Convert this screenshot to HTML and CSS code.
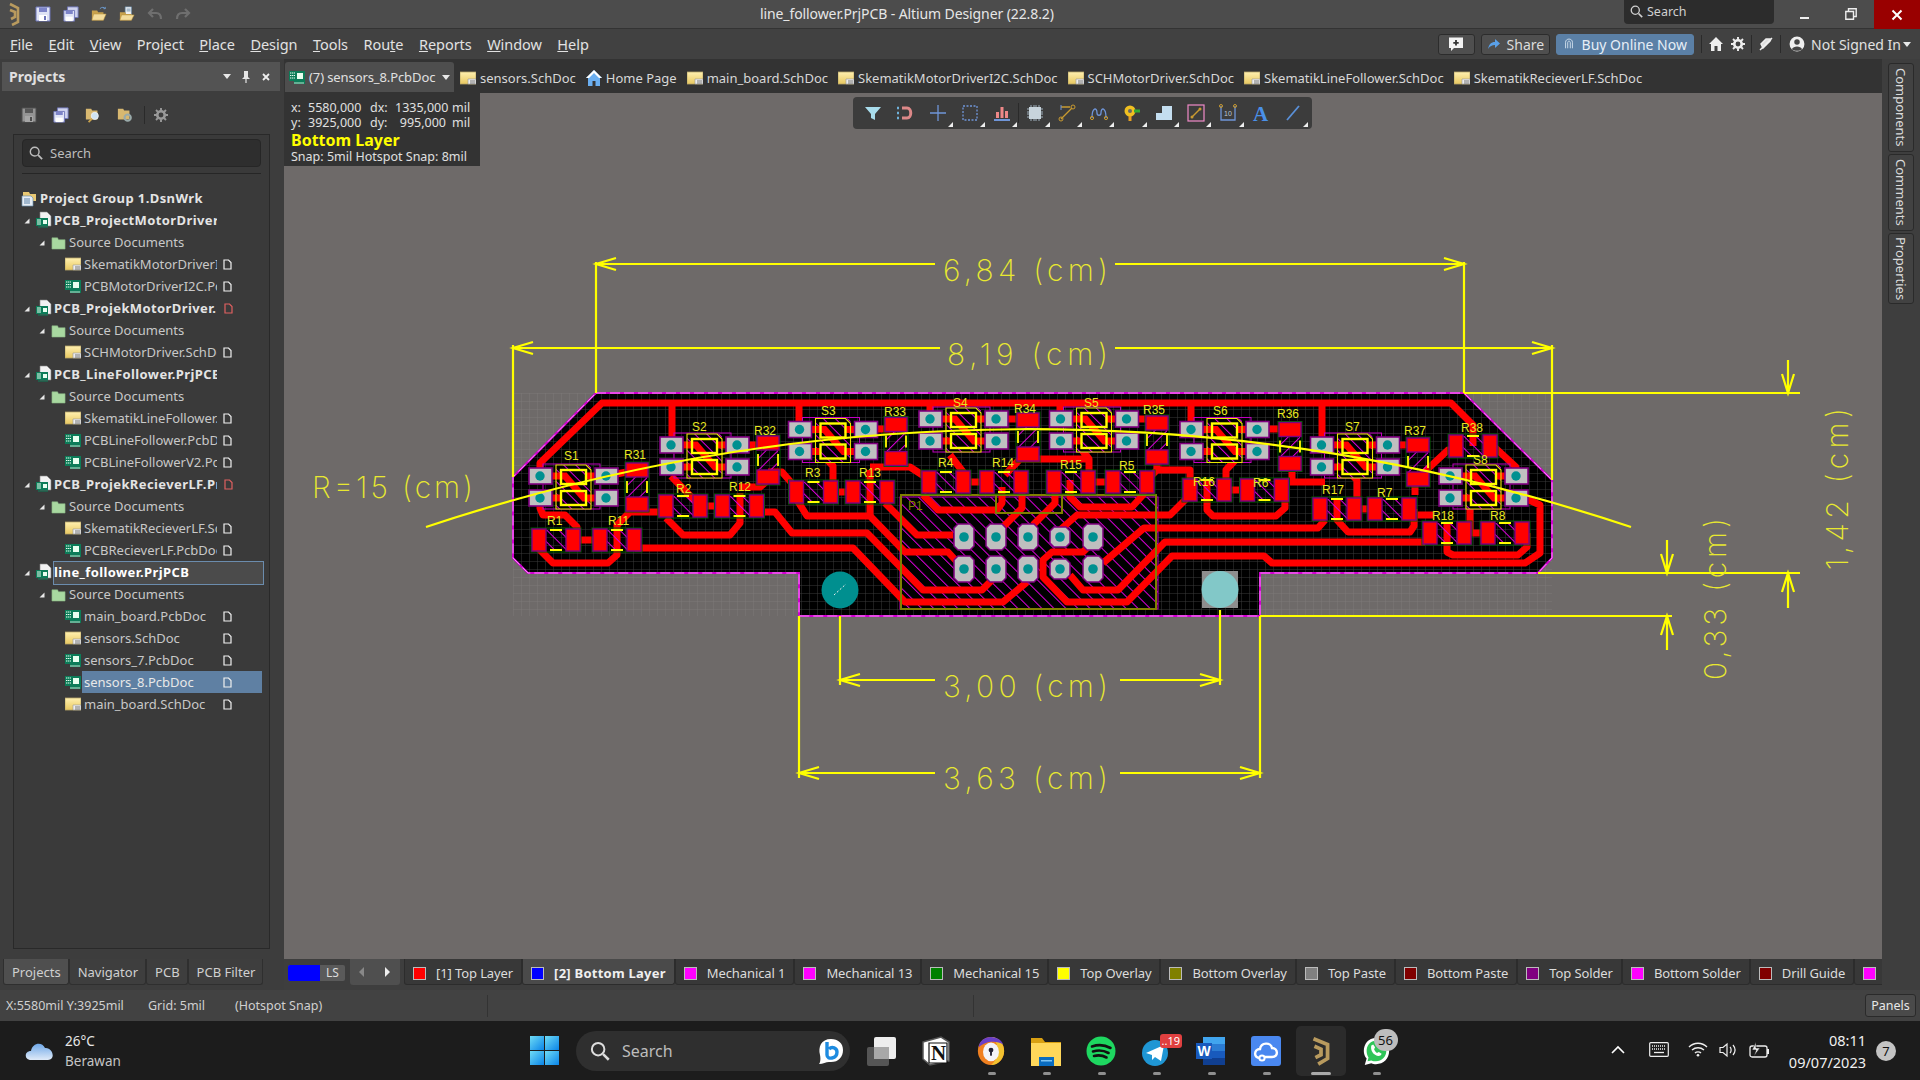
FILE: index.html
```html
<!DOCTYPE html>
<html lang="en">
<head>
<meta charset="utf-8">
<title>line_follower.PrjPCB - Altium Designer</title>
<link rel="stylesheet" href="styles.css">
</head>
<body>
<svg class="defs" xmlns="http://www.w3.org/2000/svg">
  <defs>
    <linearGradient id="gSch" x1="0" y1="0" x2="0" y2="1"><stop offset="0" stop-color="#fff0b0"/><stop offset="1" stop-color="#e8c860"/></linearGradient>
    <linearGradient id="gWin" x1="0" y1="0" x2="1" y2="1"><stop offset="0" stop-color="#6fdcf5"/><stop offset="1" stop-color="#0a84e8"/></linearGradient>
    <linearGradient id="gCloud" x1="0" y1="0" x2="0" y2="1"><stop offset="0" stop-color="#6fa8e8"/><stop offset="1" stop-color="#dfeaf8"/></linearGradient>
    <symbol id="i-sch" viewBox="0 0 16 16"><path d="M0 2H16V14H0Z" fill="url(#gSch)" stroke="#b8a468" stroke-width=".8"/><path d="M8 14V9H16V14Z" fill="#eee" stroke="#999" stroke-width=".6"/><path d="M10 11H15M10 13H15" stroke="#777" stroke-width="1"/></symbol>
    <symbol id="i-pcb" viewBox="0 0 16 16"><path d="M0 2H16V12H0Z" fill="#0c7c58"/><path d="M1 4H6M1 6.5H6M1 9H6" stroke="#e8fff0" stroke-width="1.2" stroke-dasharray="1.4 .6"/><rect x="8" y="4" width="6" height="6" fill="#e8fff0"/><rect x="5" y="12" width="11" height="3" fill="#0c7c58"/><path d="M6 13V15M8 13V15M10 13V15M12 13V15M14 13V15" stroke="#e8fff0" stroke-width=".8"/></symbol>
    <symbol id="i-prj" viewBox="0 0 17 18"><path d="M5 1H12L16 5V15H5Z" fill="#f2f2f2" stroke="#888" stroke-width=".6"/><path d="M1 7H13V15H1Z" fill="#0c7c58"/><path d="M2 9H6M2 11H6M2 13H6" stroke="#e8fff0" stroke-width="1"/><rect x="8" y="9" width="4" height="4" fill="#e8fff0"/><path d="M4 15V17M6 15V17M8 15V17M10 15V17M12 15V17" stroke="#0c7c58" stroke-width="1"/></symbol>
    <symbol id="i-folder" viewBox="0 0 16 16"><path d="M1 3H7L8 5H15V15H1Z" fill="#a8d8a0" stroke="#86b080" stroke-width=".6"/></symbol>
    <symbol id="i-doc" viewBox="0 0 9 11"><path d="M1 1H5.500L8 3.500V10H1Z" fill="none" stroke="currentColor" stroke-width="1.200"/></symbol>
    <symbol id="i-grp" viewBox="0 0 17 18"><path d="M2 3H8L9 5H15V12H2Z" fill="#e9c873"/><path d="M1 7H10L12 9V17H1Z" fill="#e8eef5" stroke="#6a8fb0" stroke-width=".7"/><path d="M3 10H9M3 12H9M3 14H9" stroke="#5a82a8" stroke-width="1"/></symbol>
    <symbol id="i-tw" viewBox="0 0 6 6"><path d="M5.500 .5V5.500H.5Z" fill="#e8e8e8"/></symbol>
    <symbol id="i-save" viewBox="0 0 16 16"><path d="M1 1H15V15H1Z" fill="#dfe3f5" stroke="#6d74b8" stroke-width="1"/><path d="M4 1.500H12V6H4Z" fill="#7d84c8"/><path d="M4 9H12V15H4Z" fill="#fff"/><rect x="9" y="10" width="2" height="4" fill="#6d74b8"/></symbol>
    <symbol id="i-saveall" viewBox="0 0 18 18"><path d="M5 1H17V13H5Z" fill="#cfd3ee" stroke="#6d74b8"/><path d="M1 5H13V17H1Z" fill="#dfe3f5" stroke="#6d74b8"/><path d="M3 5.500H11V9H3Z" fill="#7d84c8"/><path d="M3 12H11V17H3Z" fill="#fff"/></symbol>
    <symbol id="i-open" viewBox="0 0 18 18"><path d="M1 5H7L8 7H14V16H1Z" fill="#c9a24d"/><path d="M3 9H17L14 16H1Z" fill="#f3dc9c" stroke="#b8923f" stroke-width=".6"/><path d="M10 3C12 1 15 1 16 3M16 3L16 1M16 3L14 3" stroke="#6fa0d8" stroke-width="1" fill="none"/></symbol>
    <symbol id="i-open2" viewBox="0 0 18 18"><path d="M7 1H14V10H7Z" fill="#f2f2f2" stroke="#6a8fb0" stroke-width=".7"/><path d="M8.500 3.500H13M8.500 5.500H13" stroke="#6a8fb0"/><path d="M1 7H7L8 9H14V16H1Z" fill="#c9a24d"/><path d="M3 10H17L14 16H1Z" fill="#f3dc9c" stroke="#b8923f" stroke-width=".6"/></symbol>
    <symbol id="i-pfind" viewBox="0 0 18 18"><path d="M1 2H7L8 4H14V14H1Z" fill="#d8b870"/><circle cx="11" cy="10" r="4" fill="#cfe3f2" stroke="#eee"/><path d="M8 13L4 17" stroke="#c9a24d" stroke-width="2"/></symbol>
    <symbol id="i-pset" viewBox="0 0 18 18"><path d="M1 2H7L8 4H14V14H1Z" fill="#d8b870"/><circle cx="12" cy="12" r="3.500" fill="none" stroke="#9aa" stroke-width="2.400"/></symbol>
    <symbol id="i-undo" viewBox="0 0 16 16"><path d="M6 3L2 7L6 11M2 7H9C12 7 14 9 14 13" fill="none" stroke="#6f6f6f" stroke-width="2.200"/></symbol>
    <symbol id="i-gear" viewBox="0 0 16 16"><circle cx="8" cy="8" r="4.300" fill="none" stroke="currentColor" stroke-width="3"/><path d="M8 0V3M8 13V16M0 8H3M13 8H16M2.300 2.300L4.400 4.400M11.600 11.600L13.700 13.700M13.700 2.300L11.600 4.400M4.400 11.600L2.300 13.700" stroke="currentColor" stroke-width="2.200"/></symbol>
    <symbol id="i-search" viewBox="0 0 16 16"><circle cx="6.500" cy="6.500" r="5" fill="none" stroke="currentColor" stroke-width="1.600"/><path d="M10.500 10.500L15 15" stroke="currentColor" stroke-width="2"/></symbol>
  </defs>
</svg>

<div class="app">
  <header class="titlebar">
    <svg class="logo" viewBox="0 0 14 24"><path d="M3 2L11 6V20L5 23M3 8L8 10V15L4 17" fill="none" stroke="#b89a5e" stroke-width="2.600"/></svg>
    <div class="qa">
      <svg class="ic16"><use href="#i-save"/></svg>
      <svg class="ic16"><use href="#i-saveall"/></svg>
      <svg class="ic16"><use href="#i-open"/></svg>
      <svg class="ic16"><use href="#i-open2"/></svg>
      <svg class="ic16"><use href="#i-undo"/></svg>
      <svg class="ic16 flip"><use href="#i-undo"/></svg>
    </div>
    <div class="apptitle">line_follower.PrjPCB - Altium Designer (22.8.2)</div>
    <div class="topsearch"><svg class="ic13"><use href="#i-search"/></svg><span>Search</span></div>
    <div class="winbtns">
      <span class="wb"><i class="min"></i></span>
      <span class="wb"><svg class="ic12" viewBox="0 0 12 12"><path d="M3.500 3V.8H11.200V8.500H9M.8 3.500H8.500V11.200H.8Z" fill="none" stroke="#eee" stroke-width="1.400"/></svg></span>
      <span class="wb close"><svg class="ic12" viewBox="0 0 12 12"><path d="M1.500 1.500L10.500 10.500M10.500 1.500L1.500 10.500" stroke="#fff" stroke-width="2"/></svg></span>
    </div>
  </header>

  <nav class="menubar">
    <div class="menus">
      <span><u>F</u>ile</span><span><u>E</u>dit</span><span><u>V</u>iew</span><span>Pro<u>j</u>ect</span><span><u>P</u>lace</span><span><u>D</u>esign</span><span><u>T</u>ools</span><span>Rou<u>t</u>e</span><span><u>R</u>eports</span><span><u>W</u>indow</span><span><u>H</u>elp</span>
    </div>
    <div class="menuright">
      <span class="btn comment"><svg class="ic16" viewBox="0 0 16 16"><path d="M1 1.500H15V12H6L3 15V12H1Z" fill="#f2f2f2"/><path d="M8 4V9.500M5.300 6.800H10.700" stroke="#333" stroke-width="1.800"/></svg></span>
      <span class="btn share"><svg class="ic12" viewBox="0 0 12 12"><path d="M7 1L12 5.500L7 10V7C4 7 2 8 0 11C1 6.500 3 4 7 4Z" fill="#5aa0e8"/></svg>Share</span>
      <span class="btn buy"><svg class="ic12" viewBox="0 0 12 14"><path d="M2 12V5C2 0 10 0 10 5V12M4.500 12V5.500C4.500 3 7.500 3 7.500 5.500V12" fill="none" stroke="#d9e6f2" stroke-width="1"/></svg>Buy Online Now</span>
      <i class="vsep"></i>
      <svg class="ic14 home" viewBox="0 0 14 14"><path d="M7 0L14 7H12V14H8.500V9H5.500V14H2V7H0Z" fill="#eee"/></svg>
      <svg class="ic14 gearw"><use href="#i-gear"/></svg>
      <i class="vsep"></i>
      <svg class="ic14 plug" viewBox="0 0 14 14"><path d="M1 13L13 1M2 7L7 2H12L11 4L4 11Z" stroke="#eee" stroke-width="1.500" fill="#ddd"/></svg>
      <i class="vsep"></i>
      <svg class="ic14 user" viewBox="0 0 14 14"><circle cx="7" cy="7" r="6.500" fill="#eee"/><circle cx="7" cy="5.300" r="2.400" fill="#444"/><path d="M2.500 11.500C4 8.500 10 8.500 11.500 11.500C9.500 13.300 4.500 13.300 2.500 11.500Z" fill="#444"/></svg>
      <span class="signed">Not Signed In</span><i class="caret"></i>
    </div>
  </nav>

  <main class="work">
    <aside class="left">
      <div class="phead"><b>Projects</b><div class="pctl"><i class="caret"></i><svg class="ic10" viewBox="0 0 10 12"><path d="M3 0H7V6L9 8H5.600V12H4.400V8H1L3 6Z" fill="#e5e5e5"/></svg><svg class="ic10" viewBox="0 0 10 10"><path d="M2 2L8 8M8 2L2 8" stroke="#eee" stroke-width="1.800"/></svg></div></div>
      <div class="ptools">
        <svg class="ic16 dim"><use href="#i-save"/></svg>
        <svg class="ic16"><use href="#i-saveall"/></svg>
        <svg class="ic16"><use href="#i-pfind"/></svg>
        <svg class="ic16"><use href="#i-pset"/></svg>
        <i class="vsep"></i>
        <svg class="ic14 gearg"><use href="#i-gear"/></svg>
      </div>
      <div class="pbox">
        <div class="psearch"><svg class="ic14"><use href="#i-search"/></svg><span>Search</span></div>
        <div class="prule"></div>
        <div class="tree">
          <div class="row d0"><svg class="ic17"><use href="#i-grp"/></svg><span class="lbl bold">Project Group 1.DsnWrk</span></div>
          <div class="row d1"><svg class="tw"><use href="#i-tw"/></svg><svg class="ic17"><use href="#i-prj"/></svg><span class="lbl bold">PCB_ProjectMotorDriverI2C.PrjPCB</span></div>
          <div class="row d2"><svg class="tw"><use href="#i-tw"/></svg><svg class="ic15"><use href="#i-folder"/></svg><span class="lbl">Source Documents</span></div>
          <div class="row d3"><svg class="ic16"><use href="#i-sch"/></svg><span class="lbl">SkematikMotorDriverI2C.SchDoc</span><svg class="docic"><use href="#i-doc"/></svg></div>
          <div class="row d3"><svg class="ic16"><use href="#i-pcb"/></svg><span class="lbl">PCBMotorDriverI2C.PcbDoc</span><svg class="docic"><use href="#i-doc"/></svg></div>
          <div class="row d1"><svg class="tw"><use href="#i-tw"/></svg><svg class="ic17"><use href="#i-prj"/></svg><span class="lbl bold">PCB_ProjekMotorDriver.PrjPCB</span><svg class="docic red"><use href="#i-doc"/></svg></div>
          <div class="row d2"><svg class="tw"><use href="#i-tw"/></svg><svg class="ic15"><use href="#i-folder"/></svg><span class="lbl">Source Documents</span></div>
          <div class="row d3"><svg class="ic16"><use href="#i-sch"/></svg><span class="lbl">SCHMotorDriver.SchDoc</span><svg class="docic"><use href="#i-doc"/></svg></div>
          <div class="row d1"><svg class="tw"><use href="#i-tw"/></svg><svg class="ic17"><use href="#i-prj"/></svg><span class="lbl bold">PCB_LineFollower.PrjPCB</span></div>
          <div class="row d2"><svg class="tw"><use href="#i-tw"/></svg><svg class="ic15"><use href="#i-folder"/></svg><span class="lbl">Source Documents</span></div>
          <div class="row d3"><svg class="ic16"><use href="#i-sch"/></svg><span class="lbl">SkematikLineFollower.SchDoc</span><svg class="docic"><use href="#i-doc"/></svg></div>
          <div class="row d3"><svg class="ic16"><use href="#i-pcb"/></svg><span class="lbl">PCBLineFollower.PcbDoc</span><svg class="docic"><use href="#i-doc"/></svg></div>
          <div class="row d3"><svg class="ic16"><use href="#i-pcb"/></svg><span class="lbl">PCBLineFollowerV2.PcbDoc</span><svg class="docic"><use href="#i-doc"/></svg></div>
          <div class="row d1"><svg class="tw"><use href="#i-tw"/></svg><svg class="ic17"><use href="#i-prj"/></svg><span class="lbl bold">PCB_ProjekRecieverLF.PrjPCB</span><svg class="docic red"><use href="#i-doc"/></svg></div>
          <div class="row d2"><svg class="tw"><use href="#i-tw"/></svg><svg class="ic15"><use href="#i-folder"/></svg><span class="lbl">Source Documents</span></div>
          <div class="row d3"><svg class="ic16"><use href="#i-sch"/></svg><span class="lbl">SkematikRecieverLF.SchDoc</span><svg class="docic"><use href="#i-doc"/></svg></div>
          <div class="row d3"><svg class="ic16"><use href="#i-pcb"/></svg><span class="lbl">PCBRecieverLF.PcbDoc</span><svg class="docic"><use href="#i-doc"/></svg></div>
          <div class="row d1 current"><svg class="tw"><use href="#i-tw"/></svg><svg class="ic17"><use href="#i-prj"/></svg><span class="lbl bold">line_follower.PrjPCB</span></div>
          <div class="row d2"><svg class="tw"><use href="#i-tw"/></svg><svg class="ic15"><use href="#i-folder"/></svg><span class="lbl">Source Documents</span></div>
          <div class="row d3"><svg class="ic16"><use href="#i-pcb"/></svg><span class="lbl">main_board.PcbDoc</span><svg class="docic"><use href="#i-doc"/></svg></div>
          <div class="row d3"><svg class="ic16"><use href="#i-sch"/></svg><span class="lbl">sensors.SchDoc</span><svg class="docic"><use href="#i-doc"/></svg></div>
          <div class="row d3"><svg class="ic16"><use href="#i-pcb"/></svg><span class="lbl">sensors_7.PcbDoc</span><svg class="docic"><use href="#i-doc"/></svg></div>
          <div class="row d3 sel"><svg class="ic16"><use href="#i-pcb"/></svg><span class="lbl">sensors_8.PcbDoc</span><svg class="docic"><use href="#i-doc"/></svg></div>
          <div class="row d3"><svg class="ic16"><use href="#i-sch"/></svg><span class="lbl">main_board.SchDoc</span><svg class="docic"><use href="#i-doc"/></svg></div>
        </div>
      </div>
      <div class="ltabs"><span class="on">Projects</span><span>Navigator</span><span>PCB</span><span>PCB Filter</span></div>
    </aside>

    <section class="center">
      <div class="doctabs">
        <span class="dt active"><svg class="ic16"><use href="#i-pcb"/></svg>(7) sensors_8.PcbDoc<i class="caret"></i></span>
        <span class="dt"><svg class="ic16"><use href="#i-sch"/></svg>sensors.SchDoc</span>
        <span class="dt"><svg class="ic16" viewBox="0 0 16 16"><path d="M8 0L16 8H14V16H9.500V11H6.500V16H2V8H0Z" fill="#6aaef0"/><path d="M8 0L16 8H13L8 3L3 8H0Z" fill="#fff"/></svg>Home Page</span>
        <span class="dt"><svg class="ic16"><use href="#i-sch"/></svg>main_board.SchDoc</span>
        <span class="dt"><svg class="ic16"><use href="#i-sch"/></svg>SkematikMotorDriverI2C.SchDoc</span>
        <span class="dt"><svg class="ic16"><use href="#i-sch"/></svg>SCHMotorDriver.SchDoc</span>
        <span class="dt"><svg class="ic16"><use href="#i-sch"/></svg>SkematikLineFollower.SchDoc</span>
        <span class="dt"><svg class="ic16"><use href="#i-sch"/></svg>SkematikRecieverLF.SchDoc</span>
      </div>

      <div class="canvas">
        <svg class="board" viewBox="284 93 1598 866" xmlns="http://www.w3.org/2000/svg">
          <defs>
            <pattern id="gridOut" width="8" height="8" patternUnits="userSpaceOnUse" x="513" y="393"><path d="M8 0H0V8" fill="none" stroke="#7c7877" stroke-width="1"/></pattern>
            <pattern id="gridIn" width="8" height="8" patternUnits="userSpaceOnUse" x="513" y="393"><path d="M8 0H0V8" fill="none" stroke="#3a3a3a" stroke-width="1"/></pattern>
            <pattern id="hatch" width="8.500" height="8.500" patternUnits="userSpaceOnUse" patternTransform="rotate(-45)"><path d="M0 0V8.500" stroke="#e000e0" stroke-width="2"/></pattern>
            <g id="sens">
              <rect x="-30" y="-23" width="57" height="45" fill="none" stroke="#c000c0" stroke-width="1"/>
              <rect x="-17" y="-22" width="35" height="44" fill="#000"/>
              <rect x="-17" y="-22" width="35" height="44" fill="url(#hatch)"/>
              <path d="M-33 -11H-8L11 11H33M-33 11H-12M12 -11H33" fill="none" stroke="#f00" stroke-width="7"/>
              <g fill="#c0c0c0" stroke="#800080" stroke-width="1.600">
                <rect x="-44" y="-19" width="23" height="16"/><rect x="-44" y="3" width="23" height="16"/><rect x="22" y="-19" width="23" height="16"/><rect x="22" y="3" width="23" height="16"/>
              </g>
              <g fill="#009090"><circle cx="-33" cy="-11" r="4.700"/><circle cx="-33" cy="11" r="4.700"/><circle cx="33" cy="-11" r="4.700"/><circle cx="33" cy="11" r="4.700"/></g>
              <path d="M-17 -22H13L18 -17V22H-17Z" fill="none" stroke="#e8e800" stroke-width="1.100"/>
              <g fill="none" stroke="#ff0" stroke-width="2.400"><rect x="-12" y="-17" width="25" height="14"/><rect x="-12" y="4" width="25" height="14"/></g>
            </g>
            <g id="res">
              <rect x="-25" y="-12" width="50" height="24" fill="none" stroke="#006000"/>
              <rect x="-10" y="-10" width="20" height="20" fill="url(#hatch)"/>
              <g fill="#f00" stroke="#800080" stroke-width="1.400"><rect x="-24" y="-11" width="14" height="22"/><rect x="10" y="-11" width="14" height="22"/></g>
              <path d="M-6 -10H6M-6 10H6" stroke="#ff0" stroke-width="1.800"/>
            </g>
            <g id="pad">
              <path d="M-6 -13H6L10 -9V9L6 13H-6L-10 9V-9Z" fill="#bfbfbf" stroke="#800080" stroke-width="1.500"/>
              <circle r="4.800" fill="#009090"/>
            </g>
            <g id="pads">
              <path d="M-6 -10H6L10 -6V6L6 10H-6L-10 6V-6Z" fill="#bfbfbf" stroke="#800080" stroke-width="1.500"/>
              <circle r="4.800" fill="#009090"/>
            </g>
          </defs>

          <rect x="513" y="393" width="1039" height="223" fill="url(#gridOut)"/>
          <path d="M596 393H1464L1552 480V558L1538 573H1260V616H799V573H528L513 558V477Z" fill="#000"/>
          <path d="M596 393H1464L1552 480V558L1538 573H1260V616H799V573H528L513 558V477Z" fill="url(#gridIn)"/>

          <rect x="900" y="497" width="258" height="112" fill="#000"/>
          <rect x="900" y="497" width="258" height="112" fill="url(#hatch)"/>
          <rect x="900" y="497" width="258" height="112" fill="none" stroke="#c000c0"/>

          <g fill="none" stroke="#f00" stroke-width="7" stroke-linejoin="round">
            <path d="M540 476V463L602 403H1451L1473 425V446"/>
            <path d="M672 403V445M799 403V429M930 403V419M1060 403V419M1191 403V429M1322 403V445"/>
            <path d="M606 476L637 470M637 508L630 512H666M630 512L617 525V555L608 563H553L535 545"/>
            <path d="M540 498V508L543 515H565L577 527V540M573 540H600"/>
            <path d="M635 548H853L905 602H1003L1027 582"/>
            <path d="M671 476L700 506H722M740 493V523L730 535H683L666 518M757 512H775L792 533H867L923 590H982L992 580"/>
            <path d="M737 445H768M739 487H760L768 480M768 472H782L796 488M797 500L807 516H870L905 552H948L960 565"/>
            <path d="M885 503L917 535H953M820 452L833 466V492H853M870 470V516M870 467H910L930 480M866 429H896M896 459V467"/>
            <path d="M950 455L967 477V490M963 482H987M923 495L938 510H997L1002 503V487M1022 480V508L1003 527M1055 480V503L1033 525"/>
            <path d="M1070 480V497L1080 507H1132L1143 495V480M1089 482H1113M1060 530L1077 515H1170L1188 497V480"/>
            <path d="M1103 563L1144 528H1318L1325 520M1070 575L1083 590H1118L1165 542H1425"/>
            <path d="M1090 545L1083 552H1052L1043 560V577L1067 602H1127L1172 556H1264L1272 563H1525L1540 553V505L1529 500H1516"/>
            <path d="M1147 480L1157 470V457M1157 470H1190V480M1240 455L1226 470V492M1207 480V510L1213 516H1276L1285 508V495M1224 490H1247M1292 465V482M1282 482H1325"/>
            <path d="M1344 467L1357 480V509M1337 500V520L1348 532H1410L1414 526V509M1355 509H1374M1415 495V480M1410 515H1433M1418 478L1448 450H1456"/>
            <path d="M1387 445H1418M1257 429H1290M1127 419H1157M996 419H1028M1005 475L1020 459H1089V482M1078 445L1089 459"/>
            <path d="M1470 505V533M1464 533H1488M1490 443L1516 467V476M1447 522V552L1453 555H1518L1527 547V533"/>
          </g>

          <g fill="none" stroke="#808000" stroke-width="2"><rect x="901" y="495" width="255" height="114"/><rect x="996" y="495" width="66" height="18"/></g>
          <text class="lab olive" x="908" y="510">P1</text>

          <use href="#sens" x="573" y="487"/><use href="#sens" x="704" y="456"/><use href="#sens" x="832.500" y="440.500"/><use href="#sens" x="963" y="430"/><use href="#sens" x="1093.500" y="430"/><use href="#sens" x="1224" y="440.500"/><use href="#sens" x="1354.500" y="456"/><use href="#sens" x="1483" y="487"/>

          <use href="#res" x="556" y="540"/><use href="#res" x="617" y="540"/><use href="#res" x="683" y="506"/><use href="#res" x="739.500" y="506"/><use href="#res" x="813.500" y="492"/><use href="#res" x="870" y="492"/><use href="#res" x="946" y="482"/><use href="#res" x="1004" y="482"/><use href="#res" x="1071" y="482"/><use href="#res" x="1130" y="482"/><use href="#res" x="1207" y="490"/><use href="#res" x="1264.500" y="490"/><use href="#res" x="1337" y="509"/><use href="#res" x="1392" y="509"/><use href="#res" x="1447" y="533"/><use href="#res" x="1505" y="533"/><use href="#res" x="1473" y="446"/>
          <use href="#res" transform="translate(637 487) rotate(90)"/><use href="#res" transform="translate(768 460) rotate(90)"/><use href="#res" transform="translate(896 441.500) rotate(90)"/><use href="#res" transform="translate(1028 437) rotate(90)"/><use href="#res" transform="translate(1157 440) rotate(90)"/><use href="#res" transform="translate(1290 446.500) rotate(90)"/><use href="#res" transform="translate(1418 462) rotate(90)"/>

          <use href="#pad" x="964" y="537"/><use href="#pad" x="996" y="537"/><use href="#pad" x="1028" y="537"/><use href="#pads" x="1060" y="537"/><use href="#pad" x="1093" y="537"/>
          <use href="#pad" x="964" y="569"/><use href="#pad" x="996" y="569"/><use href="#pad" x="1028" y="569"/><use href="#pads" x="1060" y="569"/><use href="#pad" x="1093" y="569"/>

          <circle cx="840" cy="590" r="18.500" fill="#008f8f"/>
          <path d="M834 595L846 584" stroke="#eee" stroke-width="1" stroke-dasharray="2 2"/>
          <rect x="1202" y="571" width="36" height="37" fill="#8e8e8e"/>
          <circle cx="1220" cy="589.500" r="18.500" fill="#82c8c8"/>

          <g class="labs">
            <text class="lab" x="564" y="460">S1</text><text class="lab" x="692" y="431">S2</text><text class="lab" x="821" y="415">S3</text><text class="lab" x="953" y="407">S4</text><text class="lab" x="1084" y="407">S5</text><text class="lab" x="1213" y="415">S6</text><text class="lab" x="1345" y="431">S7</text><text class="lab" x="1473" y="464">S8</text>
            <text class="lab" x="547" y="525">R1</text><text class="lab" x="608" y="525">R11</text><text class="lab" x="676" y="493">R2</text><text class="lab" x="729" y="491">R12</text><text class="lab" x="805" y="477">R3</text><text class="lab" x="859" y="477">R13</text><text class="lab" x="938" y="467">R4</text><text class="lab" x="992" y="467">R14</text><text class="lab" x="1060" y="469">R15</text><text class="lab" x="1119" y="470">R5</text><text class="lab" x="1193" y="486">R16</text><text class="lab" x="1253" y="487">R6</text><text class="lab" x="1322" y="494">R17</text><text class="lab" x="1377" y="497">R7</text><text class="lab" x="1432" y="520">R18</text><text class="lab" x="1490" y="520">R8</text>
            <text class="lab" x="624" y="459">R31</text><text class="lab" x="754" y="435">R32</text><text class="lab" x="884" y="416">R33</text><text class="lab" x="1014" y="413">R34</text><text class="lab" x="1143" y="414">R35</text><text class="lab" x="1277" y="418">R36</text><text class="lab" x="1404" y="435">R37</text><text class="lab" x="1461" y="432">R38</text>
          </g>

          <path d="M596 393H1464L1552 480V558L1538 573H1260V616H799V573H528L513 558V477Z" fill="none" stroke="#d000d0" stroke-width="2"/>
          <path d="M596 393H1464L1552 480V558L1538 573H1260V616H799V573H528L513 558V477Z" fill="none" stroke="#ff90ff" stroke-width="1" stroke-dasharray="10 4"/>

          <g fill="none" stroke="#ff0" stroke-width="2.200">
            <path d="M596 264H935M1115 264H1464M616 258L596 264L616 270M1444 258L1464 264L1444 270M596 262V393M1464 262V393"/>
            <path d="M513 348H940M1115 348H1552M533 342L513 348L533 354M1532 342L1552 348L1532 354M513 345V477M1552 345V480"/>
            <path d="M1464 393H1800M1788 360V393M1782 374L1788 393L1794 374M1538 573H1800M1788 573V608M1782 592L1788 573L1794 592"/>
            <path d="M1260 616H1672M1667 540V573M1661 554L1667 573L1673 554M1667 616V650M1661 635L1667 616L1673 635"/>
            <path d="M840 616V685M1220 610V685M840 680H935M1120 680H1220M860 674L840 680L860 686M1200 674L1220 680L1200 686"/>
            <path d="M799 616V778M1260 616V778M799 773H935M1120 773H1260M819 767L799 773L819 779M1240 767L1260 773L1240 779"/>
            <path d="M426 527A1905 1905 0 0 1 1631 527"/>
          </g>
          <g class="dimt">
            <text x="943" y="281" textLength="165" lengthAdjust="spacing">6,84 (cm)</text>
            <text x="947" y="365" textLength="161" lengthAdjust="spacing">8,19 (cm)</text>
            <text x="943" y="697" textLength="165" lengthAdjust="spacing">3,00 (cm)</text>
            <text x="943" y="789" textLength="165" lengthAdjust="spacing">3,63 (cm)</text>
            <text x="312" y="498" textLength="161" lengthAdjust="spacing">R=15 (cm)</text>
            <text transform="translate(1848 570) rotate(-90)" textLength="162" lengthAdjust="spacing">1,42 (cm)</text>
            <text transform="translate(1726 680) rotate(-90)" textLength="162" lengthAdjust="spacing">0,33 (cm)</text>
          </g>
        </svg>

        <div class="hud">
          <div class="hudrow"><span>x:</span><span>5580,000</span><span>dx:</span><span>1335,000</span><span>mil</span></div>
          <div class="hudrow"><span>y:</span><span>3925,000</span><span>dy:</span><span>995,000</span><span>mil</span></div>
          <div class="hudlayer">Bottom Layer</div>
          <div class="hudsnap">Snap: 5mil Hotspot Snap: 8mil</div>
        </div>

        <div class="pcbtools">
          <span class="t"><svg viewBox="0 0 18 18"><path d="M1 3H17L11 10V16L7 14V10Z" fill="#a8dcec"/></svg></span>
          <span class="t"><svg viewBox="0 0 18 18"><path d="M6 4H11C16 4 16 14 11 14H6" fill="none" stroke="#d88" stroke-width="3"/><path d="M1 4H3M1 9H3M1 14H3" stroke="#6fb0d8" stroke-width="2.500"/></svg></span>
          <span class="t c"><svg viewBox="0 0 18 18"><path d="M9 1V17M1 9H17" stroke="#6f95d8" stroke-width="1.300"/></svg></span>
          <span class="t c"><svg viewBox="0 0 18 18"><rect x="2" y="2" width="14" height="14" fill="none" stroke="#6f95d8" stroke-width="1.300" stroke-dasharray="2 1.500"/></svg></span>
          <span class="t c"><svg viewBox="0 0 18 18"><path d="M1 16H17" stroke="#6f95d8" stroke-width="2"/><rect x="3" y="8" width="3" height="6" fill="#e88"/><rect x="7.500" y="3" width="3" height="11" fill="#e88"/><rect x="12" y="7" width="3" height="7" fill="#e88"/></svg></span>
          <i class="vsep tall"></i>
          <span class="t c"><svg viewBox="0 0 18 18"><rect x="3" y="3" width="12" height="12" fill="#c8d4dc"/><path d="M5 1V3M8 1V3M10 1V3M13 1V3M5 15V17M8 15V17M10 15V17M13 15V17M1 5H3M1 8H3M1 10H3M1 13H3M15 5H17M15 8H17M15 10H17M15 13H17" stroke="#9fb0bd"/></svg></span>
          <span class="t c"><svg viewBox="0 0 18 18"><path d="M3 15L14 4M3 3H12" stroke="#c89a30" stroke-width="1.400" fill="none"/><circle cx="3" cy="15" r="2" fill="none" stroke="#c89a30"/><circle cx="15" cy="3" r="2" fill="none" stroke="#c89a30"/><path d="M3 1V6" stroke="#6f95d8"/></svg></span>
          <span class="t c"><svg viewBox="0 0 18 18"><path d="M2 14C2 3 7 3 7 9C7 12 11 12 11 9C11 3 16 3 16 14" fill="none" stroke="#6f95d8" stroke-width="1.300"/><circle cx="2" cy="14" r="1.600" fill="none" stroke="#c89a30"/><circle cx="16" cy="14" r="1.600" fill="none" stroke="#c89a30"/></svg></span>
          <span class="t c"><svg viewBox="0 0 18 18"><circle cx="7" cy="7" r="5.500" fill="#f0c020"/><circle cx="7" cy="7" r="2" fill="#666"/><rect x="11" y="5.500" width="6" height="3" fill="#3a3"/><rect x="5.500" y="12" width="3" height="5" fill="#e8a020"/></svg></span>
          <span class="t c"><svg viewBox="0 0 18 18"><path d="M1 9H7V2H17V16H1Z" fill="#c4def0"/></svg></span>
          <span class="t c"><svg viewBox="0 0 18 18"><rect x="1" y="1" width="16" height="16" fill="none" stroke="#f08ac8" stroke-width="1.200"/><path d="M5 13L13 5" stroke="#c89a30" stroke-width="1.400"/><circle cx="5" cy="13" r="1.500" fill="#c89a30"/><circle cx="13" cy="5" r="1.500" fill="#c89a30"/></svg></span>
          <span class="t c"><svg viewBox="0 0 18 18"><path d="M2 2V16H16V2" fill="none" stroke="#6f95d8" stroke-width="1.300"/><circle cx="2" cy="2" r="1.500" fill="none" stroke="#c89a30"/><circle cx="16" cy="2" r="1.500" fill="none" stroke="#c89a30"/><text x="5" y="12" class="tn">10</text></svg></span>
          <span class="t"><svg viewBox="0 0 18 18"><text x="1" y="17" class="ta">A</text></svg></span>
          <span class="t c"><svg viewBox="0 0 18 18"><path d="M3 16L15 2" stroke="#5a90d8" stroke-width="1.800"/></svg></span>
        </div>
      </div>

      <div class="layerbar">
        <span class="ls"><i></i><b>LS</b></span>
        <span class="arrows"><i class="al"></i><i class="ar"></i></span>
        <div class="layers">
          <span class="ly"><i class="sw s-top"></i>[1] Top Layer</span>
          <span class="ly cur"><i class="sw s-bot"></i>[2] Bottom Layer</span>
          <span class="ly"><i class="sw s-mag"></i>Mechanical 1</span>
          <span class="ly"><i class="sw s-mag"></i>Mechanical 13</span>
          <span class="ly"><i class="sw s-grn"></i>Mechanical 15</span>
          <span class="ly"><i class="sw s-yel"></i>Top Overlay</span>
          <span class="ly"><i class="sw s-oli"></i>Bottom Overlay</span>
          <span class="ly"><i class="sw s-gry"></i>Top Paste</span>
          <span class="ly"><i class="sw s-mar"></i>Bottom Paste</span>
          <span class="ly"><i class="sw s-pur"></i>Top Solder</span>
          <span class="ly"><i class="sw s-mag"></i>Bottom Solder</span>
          <span class="ly"><i class="sw s-mar"></i>Drill Guide</span>
          <span class="ly end"><i class="sw s-mag"></i></span>
        </div>
      </div>
    </section>

    <aside class="right">
      <span class="vt v1">Components</span>
      <span class="vt v2">Comments</span>
      <span class="vt v3">Properties</span>
    </aside>
  </main>

  <div class="statusbar">
    <span class="st1">X:5580mil Y:3925mil</span><span class="st2">Grid: 5mil</span><span class="st3">(Hotspot Snap)</span>
    <i class="ssep s1"></i><i class="ssep s2"></i>
    <span class="panels">Panels</span>
  </div>

  <footer class="taskbar">
    <div class="weather">
      <svg class="wicon" viewBox="0 0 30 20"><path d="M6 19C-1 19 -1 10 6 10C7 2 17 0 20 7C28 6 31 19 23 19Z" fill="url(#gCloud)"/></svg>
      <div class="wtext"><span>26°C</span><span>Berawan</span></div>
    </div>
    <svg class="winlogo" viewBox="0 0 29 29"><g fill="url(#gWin)"><rect width="14" height="14"/><rect x="15" width="14" height="14"/><rect y="15" width="14" height="14"/><rect x="15" y="15" width="14" height="14"/></g></svg>
    <div class="tsearch"><svg class="ic20"><use href="#i-search"/></svg><span>Search</span>
      <svg class="bing" viewBox="0 0 26 28"><path d="M13 2C3 2 0 10 2 18C3 23 2 26 1 27C5 27 8 25 11 25C20 26 25 20 25 13C25 6 20 2 13 2Z" fill="#fff"/><path d="M9 5V18C9 23 19 22 19 15C19 11 14 9 11 12" fill="none" stroke="#1e8be0" stroke-width="3.400"/></svg>
    </div>
    <div class="apps">
      <span class="app-i"><svg viewBox="0 0 30 30"><rect x="1" y="11" width="22" height="19" rx="2" fill="#555"/><rect x="8" y="1" width="22" height="22" rx="2" fill="#eee"/><rect x="8" y="11" width="15" height="12" fill="#a8a8a8"/></svg></span>
      <span class="app-i"><svg viewBox="0 0 30 30"><path d="M2 6L20 1L28 6V25L9 29L2 23Z" fill="#fff" stroke="#555" stroke-width="1.500"/><path d="M8 7H26V27H8Z" fill="#fff" stroke="#111" stroke-width="1.200"/><text x="10" y="24" class="ntn">N</text></svg></span>
      <span class="app-i"><svg viewBox="0 0 30 32"><ellipse cx="15" cy="16" rx="14" ry="15" fill="#f08020"/><path d="M15 1C23 1 29 8 29 16C29 24 23 31 15 31C20 27 22 22 22 15C22 9 20 4 15 1Z" fill="#f2c230"/><path d="M15 1C8 1 2 6 2 12C8 6 20 4 28 9C26 4 21 1 15 1Z" fill="#6a40c8"/><ellipse cx="15" cy="17" rx="8.500" ry="10" fill="#f4f4f8"/><circle cx="15" cy="15" r="2.600" fill="#223"/><rect x="14" y="16" width="2" height="5" fill="#223"/></svg></span>
      <span class="app-i"><svg viewBox="0 0 30 30"><path d="M0 2H11L14 6H30V28H0Z" fill="#d9a012"/><path d="M0 7H30V30H0Z" fill="#ffd75a"/><rect x="8" y="21" width="15" height="9" fill="#0a6cc0"/><rect x="10" y="24" width="11" height="1.500" fill="#7cc4f4"/></svg></span>
      <span class="app-i"><svg viewBox="0 0 30 30"><circle cx="15" cy="15" r="14.500" fill="#1ed760"/><path d="M6 10.500C12 8.500 19 9 24.500 12M7 15.500C12 14 18 14.500 22.500 17M8 20C12 19 17 19.500 20.500 21.500" fill="none" stroke="#111" stroke-width="2.600" stroke-linecap="round"/></svg></span>
      <span class="app-i"><svg viewBox="0 0 30 30"><circle cx="14" cy="17" r="13" fill="#1f96d4"/><path d="M5 17L23 9L20 25L14 21L11 24V19Z" fill="#fff"/></svg><em class="badge">..19</em></span>
      <span class="app-i"><svg viewBox="0 0 30 30"><rect x="7" y="1" width="22" height="28" rx="1" fill="#2b7cd3"/><rect x="7" y="1" width="22" height="7" fill="#41a5ee"/><rect x="7" y="15" width="22" height="7" fill="#185abd"/><rect x="7" y="22" width="22" height="7" fill="#103f91"/><rect x="0" y="7" width="16" height="16" fill="#185abd"/><text x="1.500" y="20" class="wd">W</text></svg></span>
      <span class="app-i"><svg viewBox="0 0 30 30"><rect width="30" height="30" rx="3" fill="#4a88f0"/><path d="M9 22C2 22 3 13 9 13C10 6 20 6 21 12C27 12 28 21 21 21H13" fill="none" stroke="#fff" stroke-width="2.400"/><circle cx="11" cy="22" r="2.600" fill="none" stroke="#fff" stroke-width="2"/></svg></span>
      <span class="app-i act"><svg viewBox="0 0 30 32"><path d="M7 3L22 9V24L12 30M8 11L15 14V20L9 23" fill="none" stroke="#b89a5e" stroke-width="4"/></svg></span>
      <span class="app-i"><svg viewBox="0 0 30 32"><path d="M15 2C7 2 2 8 2 16C2 19 3 22 5 24L3 31L10 29C12 30 13 30 15 30C23 30 29 24 29 16C29 8 23 2 15 2Z" fill="#fff"/><path d="M15 5C9 5 5 10 5 16C5 19 6 21 7 23L6 27L10 26C12 27 13 27 15 27C21 27 26 22 26 16C26 10 21 5 15 5Z" fill="#2fc558"/><path d="M10 10C9 14 11 18 14 20C17 22 20 22 21 19L18 17L16 18C15 17 13 15 13 14L14 12L12 9Z" fill="#fff"/></svg><em class="badge gray">56</em></span>
    </div>
    <div class="tray">
      <svg class="ic14" viewBox="0 0 14 10"><path d="M1 8L7 2L13 8" fill="none" stroke="#fff" stroke-width="1.600"/></svg>
      <svg class="kb" viewBox="0 0 20 15"><rect x=".7" y=".7" width="18.600" height="13.600" rx="1" fill="none" stroke="#eee" stroke-width="1.200"/><path d="M3 4H17M3 7H17" stroke="#eee" stroke-width="1.300" stroke-dasharray="1 1"/><path d="M5 10.500H15" stroke="#eee" stroke-width="1.300"/></svg>
      <svg class="wf" viewBox="0 0 20 15"><path d="M1 5C6 0 14 0 19 5M4 8C7.500 5 12.500 5 16 8M7 11C8.500 9.500 11.500 9.500 13 11" fill="none" stroke="#eee" stroke-width="1.400"/><circle cx="10" cy="13.300" r="1.300" fill="#eee"/></svg>
      <svg class="vol" viewBox="0 0 20 16"><path d="M1 5.500H4L8 2V14L4 10.500H1Z" fill="none" stroke="#eee" stroke-width="1.200"/><path d="M11 5C12.500 6.500 12.500 9.500 11 11M14 3C16.500 6 16.500 10 14 13" fill="none" stroke="#eee" stroke-width="1.200"/></svg>
      <svg class="bat" viewBox="0 0 22 16"><rect x="1" y="4" width="17" height="11" rx="2" fill="none" stroke="#eee" stroke-width="1.300"/><rect x="18" y="7" width="2" height="5" fill="#eee"/><path d="M7 0L3 8H7L5 14L11 6H7Z" fill="#eee" stroke="#1c1c1c" stroke-width=".6"/></svg>
      <div class="clock"><span>08:11</span><span>09/07/2023</span></div>
      <em class="notif">7</em>
    </div>
  </footer>
</div>
</body>
</html>
```

FILE: styles.css
```css
* { box-sizing: border-box; }
html, body { margin: 0; padding: 0; width: 1920px; height: 1080px; overflow: hidden; background: #3c3c3c; }
body { font-family: "Noto Sans", "Open Sans", sans-serif; font-size: 13px; color: #dcdcdc; }
i, em { font-style: normal; display: block; }
svg { display: block; flex: none; }
.defs { position: absolute; width: 0; height: 0; }

.app { width: 1920px; height: 1080px; display: flex; flex-direction: column; }

.ic10 { width: 10px; height: 12px; }
.ic12 { width: 12px; height: 12px; }
.ic13 { width: 13px; height: 13px; }
.ic14 { width: 14px; height: 14px; }
.ic15 { width: 15px; height: 15px; }
.ic16 { width: 16px; height: 16px; }
.ic17 { width: 17px; height: 18px; }
.ic20 { width: 20px; height: 20px; }

/* title bar */
.titlebar { height: 29px; flex: none; display: flex; align-items: center; background: #4c4c4c; border-bottom: 1px solid #333; position: relative; }
.logo { width: 14px; height: 24px; margin-left: 7px; }
.qa { display: flex; align-items: center; gap: 12px; margin-left: 14px; }
.flip { transform: scaleX(-1); }
.apptitle { position: absolute; left: 760px; top: 4px; font-size: 14px; line-height: 20px; color: #e6e6e6; letter-spacing: -.1px; }
.topsearch { margin-left: auto; width: 150px; height: 24px; margin-top: -5px; background: #2c2c2c; border-radius: 0 0 4px 4px; display: flex; align-items: center; gap: 4px; padding-left: 6px; color: #d0d0d0; font-size: 12.500px; }
.winbtns { display: flex; margin-left: 10px; align-self: stretch; }
.wb { width: 47px; display: flex; align-items: center; justify-content: center; }
.wb:first-child { width: 46px; margin-left: -3px; }
.wb.close { background: #990000; width: 46px; margin-bottom: -1px; }
.min { width: 9px; height: 2px; background: #eee; margin-top: 8px; }

/* menu bar */
.menubar { height: 30px; flex: none; background: #414141; display: flex; align-items: center; justify-content: space-between; padding: 0 9px 0 10px; }
.menus { display: flex; gap: 15.500px; font-size: 14.500px; color: #e2e2e2; letter-spacing: -.05px; }
.menuright { display: flex; align-items: center; gap: 0; }
.btn { height: 21px; display: flex; align-items: center; gap: 7px; border: 1px solid #2c2c2c; border-radius: 3px; background: #4f4f4f; font-size: 14px; color: #dcdcdc; }
.comment { width: 37px; justify-content: center; margin-right: 6px; }
.share { width: 69px; padding-left: 6px; margin-right: 6px; }
.buy { width: 138px; padding-left: 6px; background: #5b80a6; border-color: #5b80a6; color: #e6eef6; margin-right: 7px; }
.vsep { width: 1px; height: 18px; background: #2a2a2a; flex: none; }
.menuright .home { margin: 0 6.500px 0 7px; }
.menuright .gearw { color: #eee; margin: 0 6px 0 2px; }
.menuright .plug { margin: 0 7px; }
.menuright .user { width: 16px; height: 16px; margin: 0 6px 0 8px; }
.signed { font-size: 14px; color: #e2e2e2; }
.caret { width: 0; height: 0; border-left: 4px solid transparent; border-right: 4px solid transparent; border-top: 5px solid #e8e8e8; margin-left: 2px; }

/* work area */
.work { flex: 1; display: flex; min-height: 0; }

.left { width: 284px; flex: none; display: flex; flex-direction: column; background: #3d3d3d; padding: 3px 4px 0 2px; }
.phead { height: 29px; flex: none; background: #535353; display: flex; align-items: center; justify-content: space-between; padding: 0 9px 0 7px; font-size: 14px; color: #e0e0e0; }
.pctl { display: flex; align-items: center; gap: 10px; }
.pctl .caret { margin: 0; }
.ptools { height: 43px; flex: none; display: flex; align-items: center; gap: 16px; padding: 5px 0 0 19px; }
.ptools .vsep { margin-left: -5px; }
.ptools .ic14 { margin-left: -7px; }
.dim { filter: grayscale(1) brightness(.65); }
.gearg { color: #999; }
.pbox { flex: 1; min-height: 0; width: 257px; margin-left: 11px; border: 1px solid #292929; background: #3a3a3a; padding: 4px 8px 0 8px; margin-bottom: 10px; }
.psearch { height: 28px; background: #2e2e2e; border: 1px solid #262626; border-radius: 4px; display: flex; align-items: center; gap: 7px; padding-left: 6px; color: #bdbdbd; font-size: 13px; }
.prule { height: 1px; background: #262626; margin-top: 6px; }
.tree { margin: 13px -7px 0 -7px; color: #c8c8c8; }
.row { height: 22px; display: flex; align-items: center; position: relative; }
.lbl { overflow: hidden; white-space: nowrap; line-height: 22px; }
.bold { font-weight: 700; color: #e4e4e4; letter-spacing: .4px; }
.tw { width: 6px; height: 6px; margin-top: 2px; }
.d0 { padding-left: 6px; }
.d0 .ic17 { margin-right: 2px; }
.d1 { padding-left: 9px; }
.d1 .tw { margin-right: 5px; }
.d1 .ic17 { margin-right: 2px; }
.d1 .lbl { width: 163px; }
.d2 { padding-left: 24px; }
.d2 .tw { margin-right: 6px; }
.d2 .ic15 { margin-right: 3px; }
.d3 { padding-left: 50px; }
.d3 .ic16 { margin-right: 3px; }
.d3 .lbl { width: 133px; }
.d1 .docic { margin-left: 7px; }
.docic { width: 9px; height: 11px; margin-left: 6px; color: #f0f0f0; }
.docic.red { color: #e06060; }
.current .lbl { color: #fff; }
.current::after { content: ""; position: absolute; left: 38px; top: 0; width: 209px; height: 22px; border: 1px solid #6b8cad; background: rgba(255,255,255,.09); pointer-events: none; }
.sel::after { content: ""; position: absolute; left: 67px; top: 0; right: 6px; height: 22px; background: #5f80a3; z-index: 0; }
.sel .lbl, .sel .docic { position: relative; z-index: 1; }
.sel .lbl { color: #e8e8e8; }
.ltabs { height: 26px; flex: none; display: flex; color: #d0d0d0; font-size: 13px; margin: 0 0 5px 1px; }
.ltabs span { display: flex; align-items: center; padding: 0 7px 0 8px; border: 1px solid #2f2f2f; border-top: 0; border-radius: 0 0 3px 3px; background: #3e3e3e; }
.ltabs .on { background: #4f4f4f; }

/* center */
.center { flex: 1; min-width: 0; display: flex; flex-direction: column; background: #333; }
.doctabs { height: 34px; flex: none; background: #333; display: flex; align-items: flex-end; padding-left: 1px; font-size: 13px; color: #d8d8d8; gap: 0; }
.dt { height: 31px; display: flex; align-items: center; gap: 4px; padding: 0 10px 0 0; white-space: nowrap; }
.dt.active { width: 169px; background: #4e4e4e; border-radius: 3px 3px 0 0; padding: 0 0 0 4px; margin-right: 6px; color: #e0e0e0; height: 30px; margin-bottom: 1px; letter-spacing: -.1px; }
.dt.active .caret { margin-left: 3px; }

.canvas { flex: 1; min-height: 0; position: relative; background: #6e6a69; overflow: hidden; }
.board { position: absolute; left: 0; top: 0; width: 1598px; height: 866px; }
.lab { font-family: "Liberation Sans", sans-serif; font-size: 12px; fill: #e8e820; }
.olive { fill: #808000; }
.dimt text { font-family: "Inter", sans-serif; font-weight: 200; font-size: 30px; fill: #e8e830; }

.hud { position: absolute; left: 0; top: 0; width: 196px; height: 73px; background: #333; padding: 7px 0 0 7px; color: #e0e0e0; font-size: 12.500px; line-height: 15px; }
.hudrow { display: grid; grid-template-columns: 17px 62px 25px 57px auto; }
.hudrow span:nth-child(4) { text-align: right; padding-right: 6px; }
.hudlayer { color: #ffff00; font-weight: 700; font-size: 16px; line-height: 20px; }
.hudsnap { font-size: 12.500px; line-height: 14px; }

.pcbtools { position: absolute; left: 569px; top: 4px; width: 459px; height: 32px; background: #3c3c3c; border-radius: 4px; display: flex; align-items: center; padding-left: 4px; }
.t { width: 32.300px; height: 32px; flex: none; display: flex; align-items: center; justify-content: center; position: relative; }
.t svg { width: 18px; height: 18px; }
.t.c::after { content: ""; position: absolute; right: 1px; bottom: 2px; border-left: 5px solid transparent; border-bottom: 5px solid #eee; }
.vsep.tall { height: 20px; margin: 0 -1px 0 0; }
.tn { font-family: "Liberation Sans", sans-serif; font-size: 7px; fill: #b9c8d8; }
.ta { font-family: "Liberation Serif", serif; font-weight: 700; font-size: 21px; fill: #4a90e8; }

.layerbar { height: 31px; flex: none; background: #3e3e3e; display: flex; align-items: flex-start; padding-left: 4px; font-size: 13px; color: #dcdcdc; }
.ls { width: 57px; flex: none; height: 16px; margin-top: 6px; display: flex; background: #5a5a5a; border-radius: 2px; overflow: hidden; font-size: 12px; }
.ls i { width: 32px; background: #0000ff; }
.ls b { font-weight: 400; flex: 1; text-align: center; line-height: 16px; }
.arrows { width: 50px; flex: none; height: 26px; margin-left: 5px; background: #4f4f4f; border-radius: 0 0 3px 3px; display: flex; align-items: center; position: relative; }
.al, .ar { width: 0; height: 0; border-top: 5px solid transparent; border-bottom: 5px solid transparent; }
.al { border-right: 5px solid #888; margin-left: 9px; }
.ar { border-left: 5px solid #eee; margin-left: 21px; }
.layers { display: flex; margin-left: 4px; height: 26px; }
.ly { display: flex; flex: none; align-items: center; padding: 3px 8px 0 8px; background: #383838; border: 1px solid #2c2c2c; border-top: 0; border-radius: 0 0 3px 3px; white-space: nowrap; letter-spacing: -.1px; }
.ly.cur { background: #4a4a4a; font-weight: 700; color: #f0f0f0; letter-spacing: .25px; }
.ly.end { padding-right: 13px; }
.sw { width: 13px; height: 13px; border: 1px solid #bbb; margin-right: 10px; flex: none; }
.ly.end .sw { margin-right: 0; }
.s-top { background: #ff0000; } .s-bot { background: #0000ff; } .s-mag { background: #ff00ff; } .s-grn { background: #008000; } .s-yel { background: #ffff00; } .s-oli { background: #808000; } .s-gry { background: #808080; } .s-mar { background: #800000; } .s-pur { background: #800080; }

.right { width: 38px; flex: none; background: #3e3e3e; padding: 4px 6px 0 6px; display: flex; flex-direction: column; gap: 2px; }
.vt { writing-mode: vertical-rl; border: 1px solid #2a2a2a; border-radius: 3px; background: #424242; display: flex; justify-content: center; align-items: center; font-size: 13px; color: #dadada; width: 26px; }
.v1 { height: 89px; } .v2 { height: 77px; } .v3 { height: 71px; }

/* status bar */
.statusbar { height: 31px; flex: none; background: #424242; position: relative; display: flex; align-items: center; font-size: 12.500px; color: #d0d0d0; padding-left: 6px; }
.st1 { width: 142px; } .st2 { width: 87px; }
.ssep { position: absolute; top: 5px; width: 1px; height: 22px; background: #333; }
.s1 { left: 487px; } .s2 { left: 973px; }
.panels { position: absolute; right: 4px; top: 4px; width: 51px; height: 23px; border: 1px solid #2a2a2a; border-radius: 3px; background: #4a4a4a; display: flex; align-items: center; justify-content: center; color: #e8e8e8; }

/* task bar */
.taskbar { height: 59px; flex: none; background: #1c1c1c; display: flex; align-items: center; position: relative; }
.weather { width: 530px; flex: none; display: flex; align-items: center; padding-left: 25px; gap: 10px; }
.wicon { width: 30px; height: 20px; }
.wtext { display: flex; flex-direction: column; font-size: 13.500px; line-height: 20px; color: #e6e6e6; }
.wtext span:last-child { color: #c4c4c4; }
.winlogo { width: 29px; height: 29px; }
.tsearch { margin-left: 17px; width: 274px; height: 40px; border-radius: 20px; background: #2f2f2f; display: flex; align-items: center; padding-left: 14px; gap: 12px; font-size: 16px; color: #bdbdbd; position: relative; }
.tsearch .ic20 { color: #ddd; }
.bing { position: absolute; right: 6px; top: 6px; width: 26px; height: 28px; }
.apps { display: flex; margin-left: 3.500px; }
.app-i { width: 55px; height: 50px; display: flex; align-items: center; justify-content: center; position: relative; }
.app-i svg { width: 30px; height: 30px; }
.app-i::after { content: ""; position: absolute; bottom: 1px; left: 24px; width: 8px; height: 3px; border-radius: 2px; background: #8f8f8f; }
.app-i:nth-child(1)::after, .app-i:nth-child(2)::after { display: none; }
.app-i.act { background: #2b2b2b; border-radius: 5px; width: 50px; margin: 0 2.500px; }
.app-i.act::after { left: 15px; width: 20px; background: #aaa; }
.badge { position: absolute; left: 31px; top: 8px; min-width: 18px; height: 14px; padding: 0 2px; background: #e04040; color: #fff; border-radius: 3px; font-size: 11px; line-height: 14px; text-align: center; }
.badge.gray { left: 25px; top: 3px; width: 24px; height: 22px; border-radius: 11px; background: #bdbdbd; color: #111; font-size: 13px; line-height: 22px; }
.tray { position: absolute; left: 1611px; top: 0; right: 0; height: 100%; display: flex; align-items: center; }
.tray > svg { margin-top: -2px; }
.kb { width: 20px; height: 15px; margin-left: 24px; }
.wf { width: 20px; height: 15px; margin-left: 19px; }
.vol { width: 20px; height: 16px; margin-left: 11px; }
.bat { width: 22px; height: 16px; margin-left: 10px; }
.clock { width: 94px; display: flex; flex-direction: column; align-items: flex-end; font-size: 14.500px; line-height: 22px; color: #f0f0f0; margin-left: 1px; }
.notif { width: 20px; height: 20px; margin-left: 10px; border-radius: 50%; background: #c4c4c4; color: #111; text-align: center; font-size: 13px; line-height: 20px; }

/* small glyph text in icons */
.ntn { font-family: "Liberation Serif", serif; font-weight: 700; font-size: 21px; fill: #111; }
.wd { font-family: "Liberation Sans", sans-serif; font-weight: 700; font-size: 14px; fill: #fff; }
```
